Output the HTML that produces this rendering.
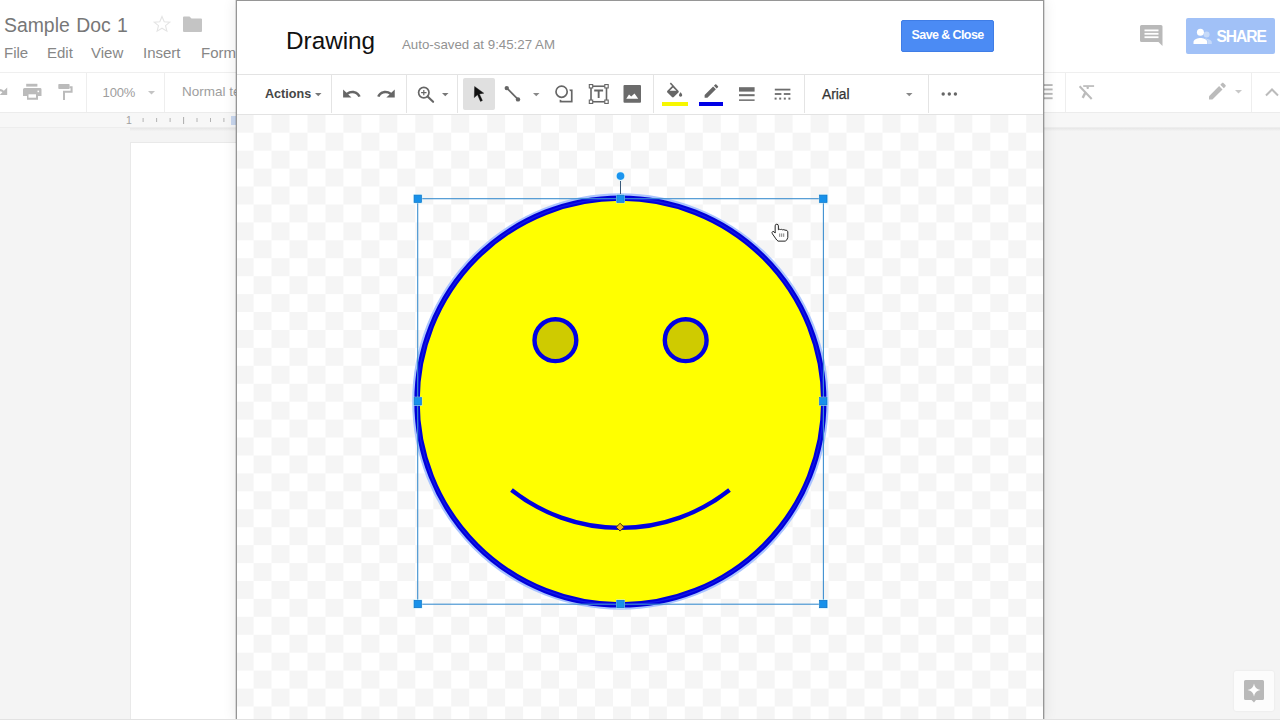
<!DOCTYPE html>
<html><head><meta charset="utf-8">
<style>
*{margin:0;padding:0;box-sizing:border-box}
html,body{width:1280px;height:720px;overflow:hidden;background:#f4f4f4;font-family:"Liberation Sans",sans-serif;position:relative}
.abs{position:absolute}
svg{position:absolute;overflow:visible}
/* doc layer */
#dochead{left:0;top:0;width:1280px;height:72px;background:#fff}
#doctb{left:0;top:72px;width:1280px;height:41px;background:#fff;border-top:1px solid #efefef;border-bottom:1px solid #ececec}
#ruler{left:0;top:113px;width:1280px;height:15px;background:#f7f7f7;border-bottom:1px solid #ededed}
#page{left:130px;top:142px;width:120px;height:578px;background:#fff;border-left:1px solid #e9e9e9;border-top:1px solid #e9e9e9}
.dtitle{left:4px;top:13.6px;font-size:19.4px;word-spacing:1px;color:#777;white-space:nowrap}
.menu{top:44px;font-size:15px;color:#878787;white-space:nowrap}
.dsep{width:1px;background:#eeeeee;top:73px;height:39px}
/* dialog */
#dlg{left:236px;top:0;width:808px;height:720px;background:#fff;border:1px solid #969696;border-bottom:none;box-shadow:0 0 0 1px rgba(0,0,0,0.12),0 0 14px rgba(0,0,0,0.09)}
#canvas{left:0;top:114px;width:806px;height:606px;overflow:hidden}
.sep{width:1px;background:#e4e4e4;top:74px;height:39px}
.ic{fill:#666}
</style></head><body>

<!-- DOC BACKGROUND -->
<div class="abs" id="dochead"></div>
<div class="abs dtitle">Sample Doc 1</div>
<svg style="left:152px;top:15px" width="20" height="18" viewBox="0 0 20 18"><path d="M10 1.5l2.2 5.2 5.6.4-4.3 3.6 1.4 5.4L10 13.2 5.1 16.1l1.4-5.4L2.2 7.1l5.6-.4z" fill="none" stroke="#e4e4e4" stroke-width="1.1"/></svg>
<svg style="left:183px;top:16px" width="19" height="16" viewBox="0 0 19 16"><path d="M0 1.5Q0 .5 1 .5h5.5l2 2H18q1 0 1 1V15q0 1-1 1H1q-1 0-1-1z" fill="#c4c4c4"/></svg>
<div class="abs menu" style="left:4px">File</div>
<div class="abs menu" style="left:47px">Edit</div>
<div class="abs menu" style="left:91px">View</div>
<div class="abs menu" style="left:143px">Insert</div>
<div class="abs menu" style="left:201px">Format</div>

<!-- comment + share -->
<svg style="left:1140px;top:25px" width="23" height="21" viewBox="0 0 23 21"><path d="M1.5 0h19.5q1.5 0 1.5 1.5V21l-4-4H1.5Q0 17 0 15.5v-14Q0 0 1.5 0z" fill="#b9b9b9"/><rect x="4.5" y="4.5" width="14" height="1.8" fill="#fff"/><rect x="4.5" y="7.9" width="14" height="1.8" fill="#fff"/><rect x="4.5" y="11.3" width="14" height="1.8" fill="#fff"/></svg>
<div class="abs" style="left:1186px;top:18px;width:89px;height:36px;background:#a1c1f7;border-radius:2px"></div>
<svg style="left:1193px;top:28px" width="22" height="17" viewBox="0 0 22 17"><circle cx="13.6" cy="6.4" r="3" fill="#c6daf9"/><path d="M11.5 10.6c2.8.2 7.3 1.4 7.3 3.6v1.8H15v-1.9c0-1.5-1.4-2.6-3.5-3.5z" fill="#c6daf9"/><circle cx="7.4" cy="4.2" r="3.5" fill="#fff"/><path d="M0.5 16v-1.9c0-2.6 4.5-4 6.9-4s6.9 1.4 6.9 4V16z" fill="#fff"/></svg>
<div class="abs" style="left:1216.5px;top:27.7px;font-size:15.6px;letter-spacing:-1.05px;font-weight:bold;color:#fff;white-space:nowrap">SHARE</div>

<div class="abs" id="doctb"></div>
<!-- doc toolbar icons -->
<svg style="left:-2px;top:86px" width="10" height="10" viewBox="0 0 10 10"><path d="M9.2 1.5v7.5H1.7l2.7-2.7C3.4 5.4 2 5 0 5.4V3.2c2.3-.4 4.3.2 5.9 1.5z" fill="#b9b9b9"/></svg>
<svg style="left:22.8px;top:83px" width="19" height="17" viewBox="0 0 19 17"><rect x="3.2" y="0.8" width="11.2" height="2.8" fill="#bbb"/><path d="M1.5 5h16q1 0 1 1.5V13h-3.5v3.8h-11V13H0V6.5Q0 5 1.5 5z" fill="#bbb"/><rect x="5.5" y="11.3" width="7.5" height="3.4" fill="#fff"/><rect x="14.5" y="7.6" width="1.6" height="1.6" fill="#fff"/></svg>
<svg style="left:58px;top:84px" width="16" height="17" viewBox="0 0 16 17"><rect x="0.3" y="0" width="11.3" height="5" rx="0.8" fill="#bbb"/><path d="M11.6 2.2h3v6.5H7v7.2H5V6.8h7.6V4.2h-1z" fill="#bbb"/></svg>
<div class="abs dsep" style="left:86px"></div>
<div class="abs" style="left:102.6px;top:85.2px;font-size:13px;letter-spacing:-0.15px;color:#9e9e9e;white-space:nowrap">100%</div>
<svg style="left:148px;top:91px" width="7" height="4" viewBox="0 0 7 4"><path d="M0 0h7L3.5 3.5z" fill="#c4c4c4"/></svg>
<div class="abs dsep" style="left:164px"></div>
<div class="abs" style="left:182px;top:84.4px;font-size:13.5px;color:#9e9e9e;white-space:nowrap">Normal text</div>
<svg style="left:1044px;top:84px" width="10" height="16" viewBox="0 0 10 16"><rect x="0" y="0.1" width="8.6" height="1.9" fill="#b8b8b8"/><rect x="0" y="4.5" width="8.6" height="1.9" fill="#b8b8b8"/><rect x="0" y="8.9" width="8.6" height="1.9" fill="#b8b8b8"/><rect x="0" y="13.3" width="8.6" height="1.9" fill="#b8b8b8"/></svg>
<div class="abs dsep" style="left:1065px"></div>
<svg style="left:1077px;top:83px" width="18" height="18" viewBox="0 0 18 18"><rect x="6.2" y="2.2" width="10.9" height="1.7" fill="#bbb"/><path d="M9.4 3.8h2.6l-.4 2.3H9.8z" fill="#bbb"/><path d="M2.6 3.2L14.7 16" stroke="#bbb" stroke-width="2"/><path d="M5.7 14.9L8.5 9.4" stroke="#bbb" stroke-width="2.4"/></svg>
<svg style="left:1209.2px;top:81.3px" width="19" height="19" viewBox="0 0 19 19"><path d="M0 15.2V18.6h3.4L13.5 8.5 10.1 5.1z" fill="#bbb"/><path d="M16.5 5.5c.4-.4.4-1 0-1.4l-2.1-2.1c-.4-.4-1-.4-1.4 0l-1.7 1.7 3.5 3.5z" fill="#bbb"/></svg>
<svg style="left:1235px;top:90.4px" width="7" height="4" viewBox="0 0 7 4"><path d="M0 0h7L3.5 3.5z" fill="#c8c8c8"/></svg>
<div class="abs dsep" style="left:1251px"></div>
<svg style="left:1265.3px;top:86.5px" width="14" height="10" viewBox="0 0 14 10"><path d="M1 8.5l6-6 6 6" fill="none" stroke="#bbb" stroke-width="2"/></svg>

<div class="abs" id="ruler"></div>
<div class="abs" style="left:126px;top:114px;font-size:10.5px;color:#a0a0a0">1</div>
<svg style="left:0;top:0" width="240" height="140"><g fill="#b3b3b3"><rect x="142.6" y="118" width="1" height="4"/><rect x="156.1" y="118" width="1" height="4"/><rect x="169.6" y="118" width="1" height="4"/><rect x="183" y="117" width="1.1" height="7"/><rect x="196.5" y="118" width="1" height="4"/><rect x="210" y="118" width="1" height="4"/><rect x="223.4" y="118" width="1" height="4"/></g><rect x="231" y="116" width="6" height="9" fill="#c9d7ef"/></svg>
<div class="abs" style="left:130px;top:128px;width:1150px;height:3px;background:linear-gradient(#e6e6e6,#f3f3f3)"></div>
<div class="abs" id="page"></div>

<!-- explore button -->
<div class="abs" style="left:1234px;top:671px;width:40px;height:40px;background:#fcfcfc;border-radius:2px;box-shadow:0 0 2px rgba(0,0,0,0.08)"></div>
<svg style="left:1244px;top:680px" width="20" height="24" viewBox="0 0 20 24"><path d="M1.5 0h17Q20 0 20 1.5v17Q20 20 18.5 20H12l-2 2.5L7.5 20H1.5Q0 20 0 18.5v-17Q0 0 1.5 0z" fill="#b9b9b9"/><path d="M10 3.5Q10.8 9.2 16.5 10 10.8 10.8 10 16.5 9.2 10.8 3.5 10 9.2 9.2 10 3.5z" fill="#fff"/></svg>

<!-- DIALOG -->
<div class="abs" id="dlg">
  <div class="abs" style="left:49px;top:25.5px;font-size:24.3px;color:#111;white-space:nowrap">Drawing</div>
  <div class="abs" style="left:165px;top:36px;font-size:13.3px;color:#929292;white-space:nowrap">Auto-saved at 9:45:27 AM</div>
  <div class="abs" style="left:664px;top:18.6px;width:93px;height:32.5px;background:#4b8bf4;border:1px solid #3f7de6;border-radius:2px"></div>
  <div class="abs" style="left:674.6px;top:27.4px;font-size:12.5px;letter-spacing:-0.6px;font-weight:bold;color:#fff;white-space:nowrap">Save &amp; Close</div>
  <div class="abs" style="left:0;top:73px;width:806px;height:1px;background:#e3e3e3"></div>
  <div class="abs" style="left:0;top:113px;width:806px;height:1px;background:#e3e3e3"></div>
  <div class="abs" id="canvas">
    <div class="abs" style="left:0;top:0;width:806px;height:606px;background:repeating-conic-gradient(#fff 0 25%,#f5f5f5 0 50%) -1.4px -0.2px/35.95px 35.86px"></div>
  </div>
</div>


<!-- DIALOG TOOLBAR (page coords) -->
<div class="abs" style="left:265px;top:87px;font-size:12.6px;font-weight:bold;color:#464646;white-space:nowrap">Actions</div>
<svg style="left:315px;top:93px" width="7" height="4" viewBox="0 0 7 4"><path d="M0 0h6.5L3.25 3.2z" fill="#777"/></svg>
<div class="abs sep" style="left:331px"></div>
<svg style="left:341.3px;top:88.6px" width="20" height="10" viewBox="0 0 20 10"><path transform="scale(1.05 1)" d="M2 0.5v8h8L6.9 5.4C8 4.6 9.3 4.2 10.8 4.2c2.6 0 4.8 1.6 5.7 3.9l2.2-.8C17.4 3.9 14.3 1.8 10.8 1.8 8.7 1.8 6.8 2.5 5.3 3.8z" fill="#666"/></svg>
<svg style="left:375.5px;top:88.6px" width="20" height="10" viewBox="0 0 20 10"><path transform="translate(-0.9 0) scale(1.05 1)" d="M18.7 0.5v8h-8l3.1-3.1C12.7 4.6 11.4 4.2 9.9 4.2c-2.6 0-4.8 1.6-5.7 3.9L2 7.3C3.3 3.9 6.4 1.8 9.9 1.8c2.1 0 4 .7 5.5 2z" fill="#666"/></svg>
<div class="abs sep" style="left:406px"></div>
<svg style="left:416.5px;top:85.5px" width="18" height="18" viewBox="0 0 18 18"><circle cx="6.8" cy="6.6" r="5.2" fill="none" stroke="#666" stroke-width="1.7"/><path d="M10.6 10.4l5.5 5.4" stroke="#666" stroke-width="2.1" stroke-linecap="round"/><path d="M6.8 3.9v5.4M4.1 6.6h5.4" stroke="#666" stroke-width="1.2"/></svg>
<svg style="left:441.5px;top:93px" width="7" height="4" viewBox="0 0 7 4"><path d="M0 0h6.5L3.25 3.2z" fill="#777"/></svg>
<div class="abs sep" style="left:457px"></div>
<div class="abs" style="left:463px;top:78px;width:31.5px;height:31.5px;background:#e0e0e0;border-radius:2px"></div>
<svg style="left:473px;top:86px" width="12" height="16" viewBox="0 0 12 16"><path d="M1.6 0.5L1.3 11.6 4.5 8.8 7.5 15.4 9.4 14.5 6.4 7.9 10.8 7.2z" fill="#111" stroke="#111" stroke-width="0.4" stroke-linejoin="round"/></svg>
<svg style="left:503px;top:85px" width="18" height="18" viewBox="0 0 18 18"><path d="M3.8 3.1L15 14.4" stroke="#666" stroke-width="1.7"/><circle cx="3.75" cy="3.1" r="2.2" fill="#666"/><circle cx="15" cy="14.4" r="2.2" fill="#666"/></svg>
<svg style="left:533px;top:93px" width="7" height="4" viewBox="0 0 7 4"><path d="M0 0h6.5L3.25 3.2z" fill="#888"/></svg>
<svg style="left:554px;top:84px" width="20" height="20" viewBox="0 0 20 20"><rect x="6.5" y="6.3" width="11.25" height="11.3" fill="none" stroke="#666" stroke-width="1.7"/><circle cx="7.6" cy="7.7" r="8.4" fill="#fff"/><circle cx="7.6" cy="7.7" r="5.6" fill="none" stroke="#666" stroke-width="1.7"/></svg>
<svg style="left:588px;top:84px" width="22" height="21" viewBox="0 0 22 21"><rect x="3" y="2.25" width="15.5" height="15.5" fill="none" stroke="#666" stroke-width="1.6"/><g fill="#fff" stroke="#666" stroke-width="1.1"><rect x="1.3" y="0.55" width="3.4" height="3.4"/><rect x="16.8" y="0.55" width="3.4" height="3.4"/><rect x="1.3" y="16.05" width="3.4" height="3.4"/><rect x="16.8" y="16.05" width="3.4" height="3.4"/></g><path d="M6.2 5.6h8.9v1.9h-3.5v6.4H9.7V7.5H6.2z" fill="#666"/></svg>
<svg style="left:623px;top:85px" width="19" height="18" viewBox="0 0 19 18"><rect x="0.5" y="0" width="17.5" height="17.75" rx="1" fill="#6b6b6b"/><path d="M3.25 13.75L6 9.5 8.25 11.5 11.5 8.5 15.25 13.75z" fill="#fff"/></svg>
<div class="abs sep" style="left:653px"></div>
<svg style="left:665.4px;top:82.3px" width="19" height="16" viewBox="0 0 19 16"><path d="M5.9 0.6l-1.1 1.1 2.3 2.3L2.4 8.7c-.5.5-.5 1.3 0 1.8l4.6 4.6c.5.5 1.3.5 1.8 0l4.6-4.6c.5-.5.5-1.3 0-1.8z" fill="#666"/><path d="M4.7 8.8L8 5.6l3.3 3.2z" fill="#fff"/><path d="M15.6 10.2s-1.6 1.8-1.6 2.9c0 .9.7 1.6 1.6 1.6s1.6-.7 1.6-1.6c0-1.1-1.6-2.9-1.6-2.9z" fill="#666"/></svg>
<div class="abs" style="left:662px;top:102px;width:26px;height:4px;background:#f7f700"></div>
<svg style="left:704.4px;top:84px" width="16" height="15" viewBox="0 0 16 15"><path d="M0.6 10.9V13.7h2.8L11.9 5.2 9.1 2.4z" fill="#666"/><path d="M14 3.3c.3-.3.3-.8 0-1.1L12.3.5c-.3-.3-.8-.3-1.1 0L9.9 1.8l2.8 2.8z" fill="#666"/></svg>
<div class="abs" style="left:698.5px;top:102px;width:24.5px;height:4px;background:#0000e6"></div>
<svg style="left:739px;top:87px" width="16" height="15" viewBox="0 0 16 15"><rect x="0" y="0.2" width="15.6" height="4.4" fill="#6d6d6d"/><rect x="0" y="7.2" width="15.6" height="2" fill="#6d6d6d"/><rect x="0" y="12.4" width="15.6" height="1.5" fill="#6d6d6d"/></svg>
<svg style="left:774px;top:88px" width="17" height="12" viewBox="0 0 17 12"><g fill="#6d6d6d"><rect x="0.8" y="0.7" width="15.6" height="1.8"/><rect x="0.8" y="5.1" width="6.6" height="1.8"/><rect x="9.8" y="5.1" width="6.6" height="1.8"/><rect x="0.6" y="9.6" width="2" height="2"/><rect x="5.2" y="9.6" width="2" height="2"/><rect x="9.8" y="9.6" width="2" height="2"/><rect x="14.4" y="9.6" width="2" height="2"/></g></svg>
<div class="abs sep" style="left:804px"></div>
<div class="abs" style="left:822px;top:86.6px;font-size:13.8px;color:#333;white-space:nowrap;-webkit-text-stroke:0.25px #333">Arial</div>
<svg style="left:906px;top:93px" width="8" height="4" viewBox="0 0 8 4"><path d="M0 0h6.5L3.25 3.2z" fill="#888"/></svg>
<div class="abs sep" style="left:928px"></div>
<svg style="left:941px;top:92px" width="17" height="4" viewBox="0 0 17 4"><circle cx="2.2" cy="2" r="1.7" fill="#666"/><circle cx="8.3" cy="2" r="1.7" fill="#666"/><circle cx="14.4" cy="2" r="1.7" fill="#666"/></svg>


<!-- SMILEY + SELECTION (page coords) -->
<svg style="left:0;top:0" width="1280" height="720" viewBox="0 0 1280 720">
  <circle cx="620.4" cy="401.5" r="203.4" fill="#ffff00"/>
  <circle cx="620.4" cy="401.5" r="206.8" fill="none" stroke="#aac4ff" stroke-width="2.8"/>
  <circle cx="620.4" cy="401.5" r="203.4" fill="none" stroke="#0000d8" stroke-width="5.4"/>
  <circle cx="620.4" cy="401.5" r="203.4" fill="none" stroke="#2a3cff" stroke-width="1.2" opacity="0.4"/>
  <circle cx="555.4" cy="340.2" r="20.9" fill="#cfcb00" stroke="#0000e4" stroke-width="4.4"/>
  <circle cx="685.7" cy="340.2" r="20.9" fill="#cfcb00" stroke="#0000e4" stroke-width="4.4"/>
  <path d="M511.5 490A175.5 175.5 0 0 0 729.5 490" fill="none" stroke="#0000e0" stroke-width="4.3"/>
  <path d="M620.1 523.3l3.9 3.9-3.9 3.9-3.9-3.9z" fill="#f0b024" stroke="#4a3800" stroke-width="1"/>
  <rect x="417.7" y="198.7" width="405.7" height="405.5" fill="none" stroke="#3d8fd0" stroke-width="1.1"/>
  <path d="M620.5 181v13" stroke="#3a5a7a" stroke-width="1"/>
  <circle cx="620.5" cy="176.1" r="4.4" fill="#c8f4ff"/>
  <circle cx="620.5" cy="176.1" r="3.8" fill="#1a93ee"/>
  <g fill="#c0f0ff">
    <rect x="413.3" y="194.3" width="9" height="9"/>
    <rect x="616" y="194.3" width="9" height="9"/>
    <rect x="818.8" y="194.3" width="9" height="9"/>
    <rect x="413.3" y="396.8" width="9" height="9"/>
    <rect x="818.8" y="396.8" width="9" height="9"/>
    <rect x="413.3" y="599.5" width="9" height="9"/>
    <rect x="616" y="599.5" width="9" height="9"/>
    <rect x="818.8" y="599.5" width="9" height="9"/>
  </g>
  <g fill="#1891ea" stroke="#0b6cc0" stroke-width="0.6">
    <rect x="414.1" y="195.1" width="7.4" height="7.4"/>
    <rect x="616.8" y="195.1" width="7.4" height="7.4"/>
    <rect x="819.6" y="195.1" width="7.4" height="7.4"/>
    <rect x="414.1" y="397.6" width="7.4" height="7.4"/>
    <rect x="819.6" y="397.6" width="7.4" height="7.4"/>
    <rect x="414.1" y="600.3" width="7.4" height="7.4"/>
    <rect x="616.8" y="600.3" width="7.4" height="7.4"/>
    <rect x="819.6" y="600.3" width="7.4" height="7.4"/>
  </g>
  <!-- hand cursor -->
  <g transform="translate(770.6 222.8) scale(0.95)">
  <path d="M4.8 10.8V3.2Q4.8 1.5 6.5 1.5Q8.2 1.5 8.2 3.2V7.3Q9.3 6.5 10.4 7.1Q11.6 6.6 12.7 7.4Q14 6.9 15.1 7.7Q17.6 7.4 18.1 9.4V15.4Q17.6 18.4 15.4 19.3H7.9Q6.6 18.5 5.6 16.9L1.9 11.6Q0.9 9.9 2.2 9.2Q3.5 8.6 4.8 10.8Z" fill="#fff" stroke="#1a1a1a" stroke-width="1" stroke-linejoin="round"/>
  <path d="M9.6 11.2v3.6M11.7 11.2v3.6M13.8 11.2v3.6" stroke="#555" stroke-width="0.8"/>
  </g>
</svg>

<div class="abs" style="left:0;top:719px;width:1280px;height:1px;background:#e2e2e2"></div>
</body></html>
